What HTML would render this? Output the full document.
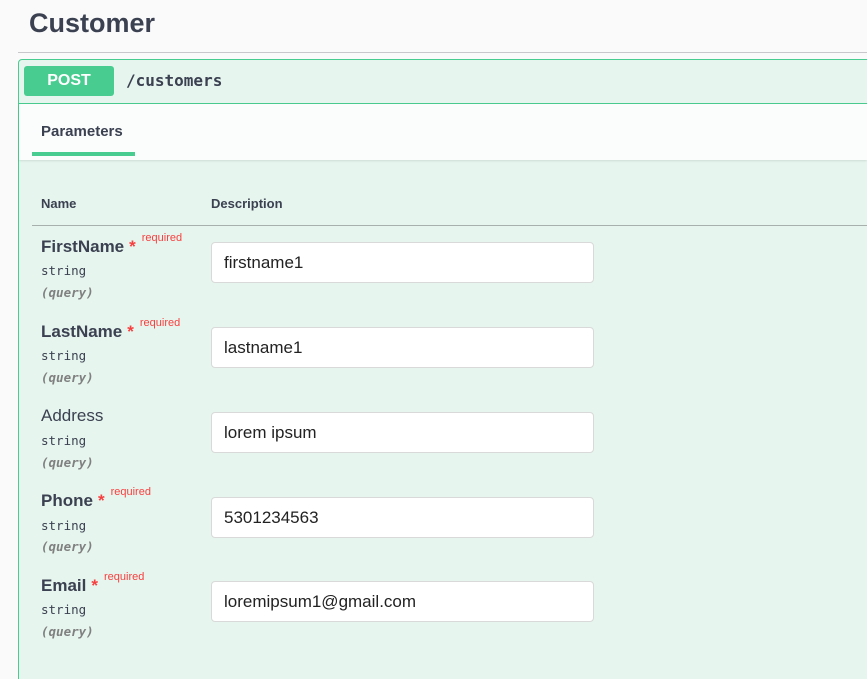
<!DOCTYPE html>
<html><head><style>
html,body{margin:0;width:867px;height:679px;overflow:hidden}
body{background:#fafafa;font-family:"Liberation Sans",sans-serif;color:#3b4151;position:relative}
.abs{position:absolute}
h1{position:absolute;left:29px;top:8px;margin:0;font-size:27px;font-weight:bold}
.hr{left:18px;right:0;top:52px;height:1px;background:#c8c8cc}
.box{left:18px;top:59px;right:-5px;bottom:-30px;border:1px solid #49cc90;border-radius:4px;background:#e6f5ee}
.post{left:24px;top:66px;width:90px;height:30px;background:#49cc90;border-radius:3px;color:#fff;font-weight:bold;font-size:16px;text-align:center;line-height:29px}
.path{left:126px;top:71px;font-family:"DejaVu Sans Mono",monospace;font-weight:bold;font-size:16px;color:#3b4151}
.hdr{left:19px;right:0;top:103px;height:1px;background:#49cc90}
.tabs{left:19px;right:0;top:104px;height:56px;background:#fbfdfc;box-shadow:0 1px 2px rgba(0,0,0,.1)}
.tab{left:41px;top:123px;font-size:15px;font-weight:bold}
.ul{left:32px;top:152px;width:103px;height:4px;background:#49cc90}
.th{top:196px;font-size:13px;font-weight:bold}
.line{left:32px;right:0;top:225px;height:1px;background:#a8b0ad}
.name{left:41px;font-size:17px;font-weight:bold}
.name .s{color:#f93e3e;font-size:17px;margin-left:5px}
.name sup{color:#f93e3e;font-size:11px;font-weight:normal;position:relative;top:-5px;margin-left:6px;vertical-align:top}
.type{left:41px;font-family:"DejaVu Sans Mono",monospace;font-size:12.5px;color:#3b4151}
.in{left:41px;font-family:"DejaVu Sans Mono",monospace;font-size:12.5px;font-style:italic;font-weight:bold;color:#808080}
.inp{left:211px;width:369px;height:39px;background:#fff;border:1px solid #d9d9d9;border-radius:4px;font-size:17px;line-height:39px;padding-left:12px;color:#222}
</style></head><body>
<h1>Customer</h1>
<div class="abs hr"></div>
<div class="abs box"></div>
<div class="abs post">POST</div>
<div class="abs path">/customers</div>
<div class="abs hdr"></div>
<div class="abs tabs"></div>
<div class="abs tab">Parameters</div>
<div class="abs ul"></div>
<div class="abs th" style="left:41px">Name</div>
<div class="abs th" style="left:211px">Description</div>
<div class="abs line"></div>

<div class="abs name" style="top:237px">FirstName<span class="s">*</span><sup>required</sup></div>
<div class="abs type" style="top:263px">string</div>
<div class="abs in" style="top:285px">(query)</div>
<div class="abs inp" style="top:242px">firstname1</div>

<div class="abs name" style="top:322px">LastName<span class="s">*</span><sup>required</sup></div>
<div class="abs type" style="top:348px">string</div>
<div class="abs in" style="top:370px">(query)</div>
<div class="abs inp" style="top:327px">lastname1</div>

<div class="abs name" style="top:406px;font-weight:normal">Address</div>
<div class="abs type" style="top:433px">string</div>
<div class="abs in" style="top:455px">(query)</div>
<div class="abs inp" style="top:412px">lorem ipsum</div>

<div class="abs name" style="top:491px">Phone<span class="s">*</span><sup>required</sup></div>
<div class="abs type" style="top:518px">string</div>
<div class="abs in" style="top:539px">(query)</div>
<div class="abs inp" style="top:497px">5301234563</div>

<div class="abs name" style="top:576px">Email<span class="s">*</span><sup>required</sup></div>
<div class="abs type" style="top:602px">string</div>
<div class="abs in" style="top:624px">(query)</div>
<div class="abs inp" style="top:581px">loremipsum1@gmail.com</div>
</body></html>
